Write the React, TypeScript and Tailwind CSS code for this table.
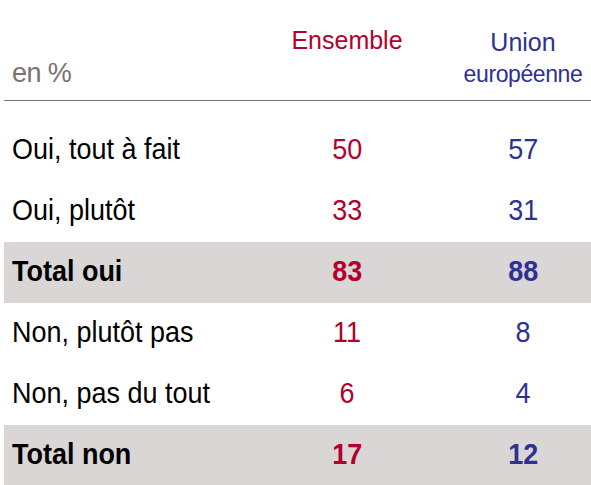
import React from 'react';

type Row = { label: string; ens: string; ue: string; total?: boolean };

const rows: Row[] = [
  { label: 'Oui, tout à fait', ens: '50', ue: '57' },
  { label: 'Oui, plutôt', ens: '33', ue: '31' },
  { label: 'Total oui', ens: '83', ue: '88', total: true },
  { label: 'Non, plutôt pas', ens: '11', ue: '8' },
  { label: 'Non, pas du tout', ens: '6', ue: '4' },
  { label: 'Total non', ens: '17', ue: '12', total: true },
];

const App: React.FC = () => {
  return (
    <div className="w-[591px] h-[485px] overflow-hidden bg-white pl-[4px] font-['Liberation_Sans',Arial,sans-serif]">
      <div className="grid grid-cols-[235px_216px_136px] h-[101px] border-b border-[#7d7472]">
        <div className="flex items-end pl-[8px] pb-[12px]">
          <span className="text-[27px] leading-[30px] tracking-[-0.6px] text-[#7b716f]">en %</span>
        </div>
        <div className="pt-[25px] text-center">
          <span className="text-[25px] leading-[30px] text-[#b3002d]">Ensemble</span>
        </div>
        <div className="pt-[27px] flex flex-col items-center text-[#2e3191]">
          <span className="text-[25px] leading-[30px]">Union</span>
          <span className="mt-[3px] text-[23px] leading-[28px] tracking-[-0.4px]">européenne</span>
        </div>
      </div>

      <div className="mt-[19px]">
        {rows.map(r => (
          <div
            key={r.label}
            className={`grid grid-cols-[235px_216px_136px] h-[61px] text-[29px] leading-[58px] ${r.total ? 'bg-[#dad6d6] font-bold' : ''}`}
          >
            <div className="pl-[8px] text-black whitespace-nowrap">
              <span className="inline-block origin-left scale-x-[0.93]">{r.label}</span>
            </div>
            <div className="text-center text-[#b3002d]">
              <span className="inline-block scale-x-[0.93]">{r.ens}</span>
            </div>
            <div className="text-center text-[#2e3191]">
              <span className="inline-block scale-x-[0.93]">{r.ue}</span>
            </div>
          </div>
        ))}
      </div>
    </div>
  );
};

export default App;
